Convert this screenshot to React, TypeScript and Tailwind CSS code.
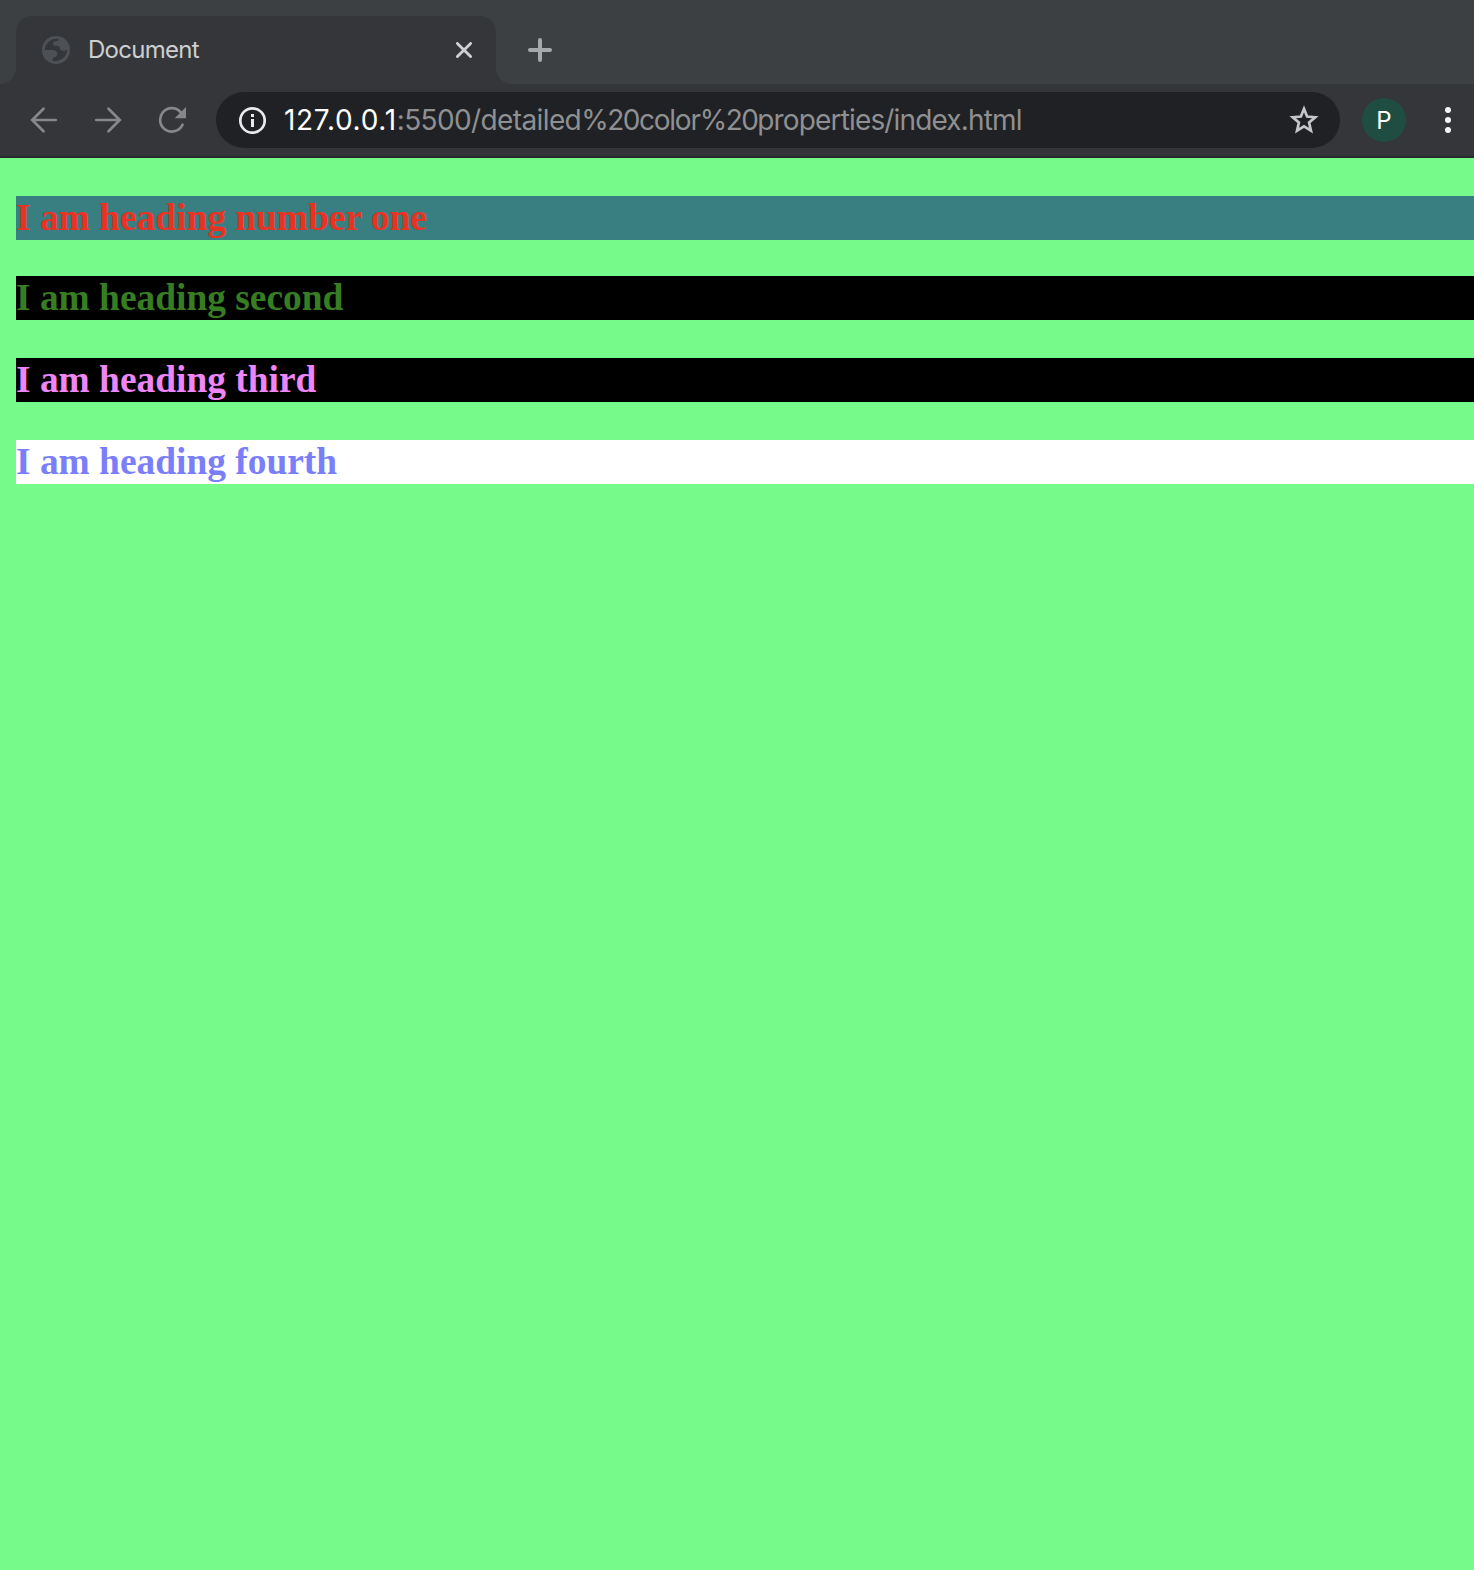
import React from 'react';

const headings = [
  { text: 'I am heading number one', style: 'mt-[38px] bg-[#397e80] text-[#ea3223]' },
  { text: 'I am heading second', style: 'mt-9 bg-black text-[#377e22]' },
  { text: 'I am heading third', style: 'mt-[38px] bg-black text-[#ee86f8]' },
  { text: 'I am heading fourth', style: 'mt-[38px] bg-white text-[#7a7ff9]' },
];

function GlobeIcon() {
  return (
    <svg width="28" height="28" viewBox="0 0 28 28" className="block shrink-0">
      <circle cx="14" cy="14" r="14" fill="#4d5156" />
      <path
        d="M16.800 3C9.500 1.600 3 7 2.800 14h6.700c3.600 0 5.800 1.500 5.800 3.700 0 1.500-.9 2.700-2.300 3.200-1.400.3-2.400 1-2.400 2.200v1.700C18 26.400 25.200 21 25.200 13.600c-1.100.8-2.300 1.300-3.500 1.300-2.800 0-4-1.300-4-3.300 0-1.100-.8-1.800-2-1.800h-1.900c-1.700 0-2.800-.8-2.800-2.300 0-1.400 1-2.200 2.600-2.200 1.900 0 3-.8 3.200-2.300z"
        fill="#35363a"
      />
    </svg>
  );
}

function ArrowIcon({ flip = false }: { flip?: boolean }) {
  return (
    <svg width="28" height="28" viewBox="0 0 28 28" className={flip ? 'block rotate-180' : 'block'} fill="none" stroke="#86878a" strokeWidth="2.7" strokeLinecap="round">
      <path d="M25.800 14H2.800M13.500 2.700 2.200 14l11.300 11.300" />
    </svg>
  );
}

function ReloadIcon() {
  return (
    <svg width="28" height="28" viewBox="0 0 28 28" className="block">
      <path d="M24.500 18.700A11.700 11.700 0 1 1 22.500 6" fill="none" stroke="#86878a" strokeWidth="2.700" strokeLinecap="round" />
      <path d="M28 1v11.300H16.700z" fill="#86878a" />
    </svg>
  );
}

function Tab() {
  return (
    <div className="flex h-[68px] w-[480px] items-center rounded-t-[16px] bg-[#35363a] pl-[26px] pr-6">
      <GlobeIcon />
      <span className="ml-[18px] flex-1 text-[24px] leading-none tracking-[-0.72px] text-[#cdcecf]">Document</span>
      <svg width="16" height="16" viewBox="0 0 16 16" className="block" stroke="#d0d1d3" strokeWidth="2.800" strokeLinecap="round">
        <path d="M1.400 1.400l13.200 13.200M14.600 1.400 1.400 14.600" />
      </svg>
    </div>
  );
}

function TabStrip() {
  return (
    <div className="flex h-[84px] items-end bg-[#3c4043]">
      <div className="h-4 w-4 bg-[#35363a]">
        <div className="h-4 w-4 rounded-br-[16px] bg-[#3c4043]" />
      </div>
      <Tab />
      <div className="h-4 w-4 bg-[#35363a]">
        <div className="h-4 w-4 rounded-bl-[16px] bg-[#3c4043]" />
      </div>
      <div className="ml-4 flex h-[68px] items-center">
        <svg width="24" height="24" viewBox="0 0 24 24" className="block" stroke="#a6a9ac" strokeWidth="4" strokeLinecap="round">
          <path d="M12 2v20M2 12h20" />
        </svg>
      </div>
    </div>
  );
}

function AddressBar() {
  return (
    <div className="flex h-14 w-[1124px] items-center rounded-full bg-[#202124] pl-[22px] pr-[21px]">
      <svg width="28" height="28" viewBox="0 0 28 28" className="block shrink-0">
        <circle cx="14.500" cy="14.500" r="12.200" fill="none" stroke="#e8eaed" strokeWidth="2.700" />
        <path d="M13 8h3v3h-3zM13 13h3v8h-3z" fill="#e8eaed" />
      </svg>
      <div className="ml-[18px] flex-1 text-[28px] leading-none whitespace-nowrap text-[#8f9092]">
        <span className="tracking-[0.7px] text-white">127.0.0.1</span>
        <span className="tracking-[-0.62px]">:5500/detailed</span>
        <span className="tracking-[-1.5px]">%20</span>
        <span className="tracking-[-1.2px]">color</span>
        <span className="tracking-[-1.6px]">%20</span>
        <span className="tracking-[-0.84px]">properties/index.html</span>
      </div>
      <svg width="30" height="30" viewBox="0 0 30 30" className="block shrink-0" fill="none" stroke="#c5c6c7" strokeWidth="2.700">
        <path d="M15 3.800l3.100 7.700 8.200.7-6.200 5.400 1.850 8L15 21.400l-6.950 4.200 1.850-8-6.200-5.400 8.200-.7z" />
      </svg>
    </div>
  );
}

function Toolbar() {
  return (
    <div className="flex h-[74px] items-center border-b-2 border-[#292a2d] bg-[#35363a]">
      <div className="ml-[30px] flex w-[186px] gap-9">
        <ArrowIcon />
        <ArrowIcon flip />
        <ReloadIcon />
      </div>
      <AddressBar />
      <div className="ml-[22px] flex h-11 w-11 items-center justify-center rounded-full bg-[#204d42] pt-px text-[24px] leading-none text-white">P</div>
      <div className="ml-[39px] flex flex-col gap-1">
        <div className="h-1.5 w-1.5 rounded-full bg-[#f1f3f4]" />
        <div className="h-1.5 w-1.5 rounded-full bg-[#f1f3f4]" />
        <div className="h-1.5 w-1.5 rounded-full bg-[#f1f3f4]" />
      </div>
    </div>
  );
}

export default function App() {
  return (
    <div className="flex h-[1570px] w-[1474px] flex-col overflow-hidden bg-[#76fa89] font-['Inter',sans-serif]">
      <TabStrip />
      <Toolbar />
      <main className="flex flex-col pl-4 font-['Liberation_Serif',serif]">
        {headings.map((h) => (
          <h3 key={h.text} className={`h-11 text-[37.44px] leading-[44px] font-bold tracking-[-0.01px] ${h.style}`}>
            {h.text}
          </h3>
        ))}
      </main>
    </div>
  );
}
